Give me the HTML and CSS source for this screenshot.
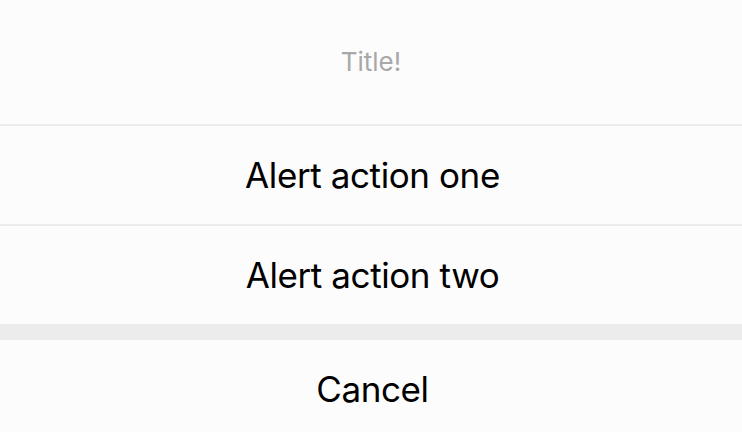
FILE: index.html
```html
<!DOCTYPE html>
<html>
<head>
<meta charset="utf-8">
<link rel="stylesheet" href="styles.css">
</head>
<body>
<div class="sheet">
  <div class="group">
    <div class="title">Title!</div>
    <div class="action">Alert action one</div>
    <div class="action">Alert action two</div>
  </div>
  <div class="gap"></div>
  <div class="group">
    <div class="action cancel">Cancel</div>
  </div>
</div>
</body>
</html>
```
FILE: styles.css
```css
html, body {
  margin: 0;
  padding: 0;
  background: #fcfcfc;
  overflow: hidden;
}
.sheet {
  width: 742px;
  display: flex;
  flex-direction: column;
  font-family: Inter, "Noto Sans", sans-serif;
}
.group {
  display: flex;
  flex-direction: column;
  background: #fcfcfc;
}
.title {
  height: 122px;
  padding-bottom: 2px;
  display: flex;
  align-items: center;
  justify-content: center;
  font-size: 26px;
  color: #a8a8a8;
  border-bottom: 2px solid #ebebeb;
}
.action {
  height: 98px;
  display: flex;
  align-items: center;
  justify-content: center;
  padding-left: 3px;
  font-size: 35px;
  letter-spacing: -0.4px;
  color: #000;
}
.action + .action {
  border-top: 2px solid #ebebeb;
}
.gap {
  height: 16px;
  background: #ececec;
}
```
